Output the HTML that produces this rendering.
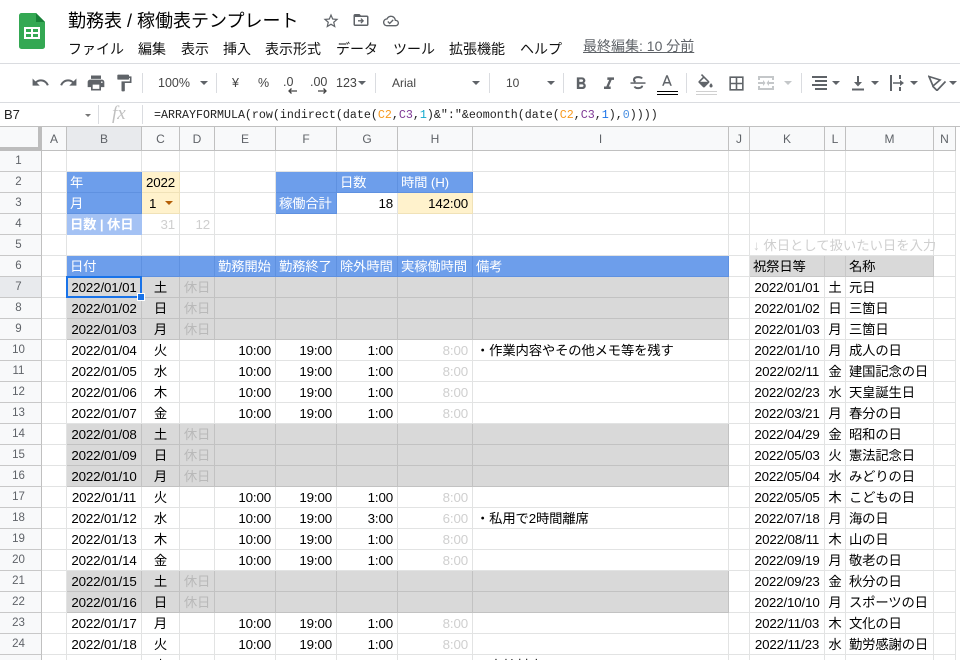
<!DOCTYPE html>
<html lang="ja"><head><meta charset="utf-8"><title>勤務表</title>
<style>
html,body{margin:0;padding:0;background:#fff;width:960px;height:660px;overflow:hidden}
body{position:relative;font-family:"Liberation Sans","Noto Sans CJK JP",sans-serif;color:#000}
.a{position:absolute;white-space:nowrap}
.t{font-size:18px;line-height:24px;top:9px;left:68px}
.m{font-size:14px;line-height:20px;top:39px;color:#111}
.tb{font-size:12.5px;line-height:16px;top:75px;color:#444}
.sep{position:absolute;width:1px;height:20px;top:73px;background:#dadce0}
.car{position:absolute;width:0;height:0;border-left:4px solid transparent;border-right:4px solid transparent;border-top:4px solid #5f6368;top:81px}
svg{position:absolute;display:block}
svg.i path{fill:#5f6368}
#grid{position:absolute;left:0;top:127px;width:960px;height:528px;overflow:hidden}
table{border-collapse:separate;border-spacing:0;table-layout:fixed;width:956px}
td,th{box-sizing:border-box;height:21px;padding:1px 3px 0;border-right:1px solid #e2e3e3;border-bottom:1px solid #e2e3e3;font-size:13.33px;line-height:16px;font-weight:400;white-space:nowrap;overflow:hidden;letter-spacing:-.15px;text-align:left;vertical-align:middle}
tr.h td,tr.h th{height:24px;background:#f8f9fa;border-right:1px solid #c0c0c0;border-bottom:1px solid #c0c0c0;font-size:12px;color:#5f6368;text-align:center;letter-spacing:0;padding:0}
th{background:#f8f9fa;border-right:1px solid #c0c0c0;border-bottom:1px solid #c8c8c8;font-size:11.5px;color:#5f6368;text-align:center;padding:0 4px 0 0;letter-spacing:0}
tr.h td.s,th.s{background:#e8eaed}
.c{text-align:center}
.r{text-align:right;padding-right:4px}
.g{background:#d9d9d9;border-color:#c2c2c2}
.b{background:#6d9eeb;color:#fff;border-color:#5f91e0}
.y{background:#fff2cc;border-color:#f0e2b8}
.l{color:#cfcfcf}
.o{color:#b9b9b9}
.p{background:#d9d9d9;border-color:#d9d9d9}
.clip{position:absolute;top:655px;height:5px;overflow:hidden;font-size:13.33px;line-height:21px;white-space:nowrap}
</style></head><body>

<svg style="left:19px;top:13px" width="26" height="36" viewBox="0 0 26 36"><path d="M2.5 0H17l9 9v24.5a2.5 2.5 0 0 1-2.5 2.5h-21A2.5 2.5 0 0 1 0 33.500V2.500A2.500 2.500 0 0 1 2.500 0z" fill="#34a853"/><path d="M17 0l9 9h-9z" fill="#188038"/><path d="M5 14h16v12H5z" fill="#fff"/><path d="M7 16h5v3H7zM14 16h5v3h-5zM7 21h5v3H7zM14 21h5v3h-5z" fill="#34a853"/></svg>

<div class="a t">勤務表 / 稼働表テンプレート</div>
<svg class="i" style="left:322px;top:11.500px" width="18" height="18" viewBox="0 0 24 24"><path d="M22 9.240l-7.190-.620L12 2 9.190 8.630 2 9.240l5.460 4.730L5.820 21 12 17.270 18.180 21l-1.630-7.030L22 9.240zM12 15.400l-3.760 2.270 1-4.280-3.320-2.880 4.380-.380L12 6.100l1.710 4.040 4.380.380-3.320 2.880 1 4.280L12 15.400z"/></svg>
<svg class="i" style="left:352px;top:11px" width="18" height="18" viewBox="0 0 24 24"><path d="M20 6h-8l-2-2H4c-1.100 0-2 .9-2 2v12c0 1.100.9 2 2 2h16c1.100 0 2-.9 2-2V8c0-1.100-.9-2-2-2zm0 12H4V8h16v10z"/><path d="M12.500 9.500l-1.200 1.200 1.500 1.500H8v1.800h4.800l-1.500 1.500 1.200 1.200 3.600-3.600z"/></svg>
<svg class="i" style="left:383px;top:12.500px" width="16" height="16" viewBox="0 0 24 24"><path d="M19.350 10.040C18.670 6.590 15.640 4 12 4 9.110 4 6.600 5.640 5.350 8.040 2.340 8.360 0 10.910 0 14c0 3.310 2.690 6 6 6h13c2.760 0 5-2.240 5-5 0-2.640-2.050-4.780-4.650-4.960zM19 18H6c-2.210 0-4-1.790-4-4 0-2.050 1.530-3.760 3.560-3.970l1.070-.110.500-.950C8.080 7.140 9.940 6 12 6c2.620 0 4.880 1.860 5.390 4.430l.3 1.500 1.530.110c1.560.1 2.780 1.410 2.780 2.960 0 1.650-1.350 3-3 3zm-9-3.820l-2.090-2.090L6.500 13.500 10 17l6.010-6.010-1.410-1.410z"/></svg>

<div class="a m" style="left:68px">ファイル</div>
<div class="a m" style="left:138px">編集</div>
<div class="a m" style="left:181px">表示</div>
<div class="a m" style="left:223px">挿入</div>
<div class="a m" style="left:265px">表示形式</div>
<div class="a m" style="left:336px">データ</div>
<div class="a m" style="left:393px">ツール</div>
<div class="a m" style="left:449px">拡張機能</div>
<div class="a m" style="left:520px">ヘルプ</div>
<div class="a m" style="left:583px;top:36px;color:#5f6368;text-decoration:underline">最終編集: 10 分前</div>

<div class="a" style="left:0;top:63px;width:960px;height:1px;background:#dadce0"></div>
<div class="a" style="left:0;top:102px;width:960px;height:1px;background:#dadce0"></div>

<svg class="i" style="left:30.500px;top:73px" width="19" height="19" viewBox="0 0 24 24"><path d="M12.500 8c-2.650 0-5.050.99-6.900 2.600L2 7v9h9l-3.620-3.620c1.390-1.160 3.160-1.880 5.120-1.880 3.540 0 6.550 2.310 7.600 5.500l2.370-.78C21.080 11.030 17.150 8 12.500 8z"/></svg>
<svg class="i" style="left:58.500px;top:73px" width="19" height="19" viewBox="0 0 24 24"><path d="M18.400 10.600C16.550 8.990 14.150 8 11.500 8c-4.650 0-8.580 3.030-9.960 7.220L3.900 16c1.050-3.190 4.050-5.500 7.600-5.500 1.950 0 3.730.72 5.120 1.880L13 16h9V7l-3.600 3.600z"/></svg>
<svg class="i" style="left:86px;top:72.500px" width="20" height="20" viewBox="0 0 24 24"><path d="M19 8H5c-1.660 0-3 1.340-3 3v6h4v4h12v-4h4v-6c0-1.660-1.340-3-3-3zm-3 11H8v-5h8v5zm3-7c-.55 0-1-.45-1-1s.45-1 1-1 1 .45 1 1-.45 1-1 1zm-1-9H6v4h12V3z"/></svg>
<svg class="i" style="left:114px;top:73px" width="20" height="20" viewBox="0 0 24 24"><path d="M18 4V3c0-.55-.45-1-1-1H5c-.55 0-1 .45-1 1v4c0 .55.45 1 1 1h12c.55 0 1-.45 1-1V6h1v4H9v11c0 .55.45 1 1 1h2c.55 0 1-.45 1-1v-9h8V4h-3z"/></svg>

<div class="sep" style="left:142px"></div>
<div class="a tb" style="left:158px">100%</div><div class="car" style="left:200px"></div>
<div class="sep" style="left:216px"></div>
<div class="a tb" style="left:232px">¥</div>
<div class="a tb" style="left:258px">%</div>
<div class="a tb" style="left:283px;top:74px">.0</div>
<svg style="left:286px;top:87px" width="12" height="8" viewBox="0 0 12 8"><path d="M11 4H3M5.500 1.500L3 4l2.500 2.500" fill="none" stroke="#444" stroke-width="1.300"/></svg>
<div class="a tb" style="left:310px;top:74px">.00</div>
<svg style="left:317px;top:87px" width="12" height="8" viewBox="0 0 12 8"><path d="M1 4h8M6.500 1.500L9 4 6.500 6.500" fill="none" stroke="#444" stroke-width="1.300"/></svg>
<div class="a tb" style="left:336px">123</div><div class="car" style="left:358px"></div>
<div class="sep" style="left:375px"></div>
<div class="a tb" style="left:392px;font-size:12px">Arial</div><div class="car" style="left:472px"></div>
<div class="sep" style="left:489px"></div>
<div class="a tb" style="left:506px;font-size:12px">10</div><div class="car" style="left:547px"></div>
<div class="sep" style="left:563px"></div>

<svg class="i" style="left:571px;top:73.500px" width="20" height="20" viewBox="0 0 24 24"><path d="M15.600 10.790c.97-.67 1.650-1.770 1.650-2.790 0-2.260-1.750-4-4-4H7v14h7.040c2.090 0 3.710-1.700 3.710-3.790 0-1.520-.86-2.820-2.150-3.420zM10 6.500h3c.83 0 1.500.67 1.500 1.500s-.67 1.500-1.500 1.500h-3v-3zm3.500 9H10v-3h3.500c.83 0 1.500.67 1.500 1.500s-.67 1.500-1.500 1.500z"/></svg>
<svg class="i" style="left:599px;top:73.500px" width="20" height="20" viewBox="0 0 24 24"><path d="M10 4v3h2.210l-3.420 8H6v3h8v-3h-2.210l3.420-8H18V4z"/></svg>
<svg style="left:629px;top:74px" width="18" height="18" viewBox="0 0 18 18"><path d="M13 4.500C12 2.800 5.500 2.300 5 5.500c-.2 1.200.6 2 1.500 2.500M5.500 12.500c1 2.200 7.500 2.300 7.700-.8" fill="none" stroke="#5f6368" stroke-width="2"/><path d="M1.500 8.300h15v1.500h-15z" fill="#5f6368"/></svg>
<svg class="i" style="left:657.500px;top:73px" width="18" height="18" viewBox="0 0 24 24"><path d="M11 3L5.500 17h2.250l1.120-3h6.250l1.120 3h2.250L13 3h-2zm-1.380 9L12 5.670 14.380 12H9.620z"/></svg>
<div class="a" style="left:657px;top:91px;width:21px;height:1px;background:#000"></div>
<div class="a" style="left:657px;top:94px;width:21px;height:1px;background:#000"></div>
<div class="sep" style="left:686px"></div>
<svg class="i" style="left:695.500px;top:74px" width="19" height="19" viewBox="0 0 24 24"><path d="M16.560 8.940L7.620 0 6.210 1.410l2.380 2.380-5.150 5.150c-.59.59-.59 1.540 0 2.120l5.500 5.500c.29.29.68.44 1.060.44s.77-.15 1.060-.44l5.500-5.500c.59-.58.59-1.530 0-2.120zM5.210 10L10 5.210 14.790 10H5.210zM19 11.500s-2 2.170-2 3.500c0 1.100.9 2 2 2s2-.9 2-2c0-1.330-2-3.500-2-3.500z"/><path d="M5 10h10l-5 5z"/></svg>
<div class="a" style="left:696px;top:91px;width:21px;height:1px;background:#d0d0d0"></div>
<div class="a" style="left:696px;top:94px;width:21px;height:1px;background:#d0d0d0"></div>
<svg class="i" style="left:726.500px;top:73.500px" width="19" height="19" viewBox="0 0 24 24"><path d="M3 3v18h18V3H3zm8 16H5v-6h6v6zm0-8H5V5h6v6zm8 8h-6v-6h6v6zm0-8h-6V5h6v6z"/></svg>
<svg style="left:758px;top:76px" width="16" height="14" viewBox="0 0 16 14"><path d="M0 0h16v2H0zM0 12h16v2H0zM0 0h2v4H0zM14 0h2v4h-2zM0 10h2v4H0zM14 10h2v4h-2zM0 6h5v2H0zM11 6h5v2h-5zM5 4l2.500 3L5 10zM11 4L8.500 7l2.500 3z" fill="#c4c7c9"/></svg>
<div class="car" style="left:784px;border-top-color:#c4c7c9"></div>
<div class="sep" style="left:801px"></div>
<svg style="left:812px;top:76px" width="15" height="14" viewBox="0 0 15 14"><path d="M0 0h15v2H0zM3 4h12v2H3zM0 8h15v2H0zM3 12h12v2H3z" fill="#5f6368"/></svg>
<div class="car" style="left:832px"></div>
<svg style="left:852px;top:76px" width="12" height="15" viewBox="0 0 12 15"><path d="M0 12.500h12v2H0zM5 0h2v6h3L6 10.500 2 6h3z" fill="#5f6368"/></svg>
<div class="car" style="left:871px"></div>
<svg style="left:890px;top:75px" width="14" height="16" viewBox="0 0 14 16"><path d="M0 0h2v16H0zM9 0h2v4H9zM9 12h2v4H9zM3 7.200h7V5l4 3-4 3V8.800H3z" fill="#5f6368"/></svg>
<div class="car" style="left:910px"></div>
<svg style="left:928px;top:75px" width="18" height="16" viewBox="0 0 18 16"><path d="M1 1.500l11 3.500-7 6z M4.500 11L9 15.500 17.500 6.500" fill="none" stroke="#5f6368" stroke-width="1.700"/></svg>
<div class="car" style="left:949px"></div>

<div class="a" style="left:4px;top:107px;font-size:13px;line-height:16px;color:#222">B7</div>
<div class="car" style="left:85px;top:114px;border-left-width:3px;border-right-width:3px;border-top-width:3px;border-top-color:#777"></div>
<div class="a" style="left:98px;top:105px;width:1px;height:19px;background:#dadce0"></div>
<div class="a" style="left:112px;top:102px;font-family:'Liberation Serif',serif;font-style:italic;font-size:19px;line-height:24px;color:#c0c0c0">fx</div>
<div class="a" style="left:142px;top:105px;width:1px;height:19px;background:#dadce0"></div>
<div class="a" style="left:154px;top:108px;font-family:'Liberation Mono',monospace;font-size:11.670px;line-height:15px;color:#222">=ARRAYFORMULA(row(indirect(date(<span style="color:#f7981d">C2</span>,<span style="color:#7e3794">C3</span>,<span style="color:#11a9cc">1</span>)&amp;":"&amp;eomonth(date(<span style="color:#f7981d">C2</span>,<span style="color:#7e3794">C3</span>,<span style="color:#1a73e8">1</span>),<span style="color:#4a90e2">0</span>))))</div>

<div class="a" style="left:0;top:126px;width:960px;height:1px;background:#c0c0c0"></div>

<div id="grid"><table>
<colgroup><col style="width:42px"><col style="width:25px"><col style="width:75px"><col style="width:38px"><col style="width:35px"><col style="width:61px"><col style="width:61px"><col style="width:61px"><col style="width:75px"><col style="width:256px"><col style="width:21px"><col style="width:75px"><col style="width:21px"><col style="width:88px"><col style="width:22px"></colgroup>
<tr class="h"><td><td>A<td class="s">B<td>C<td>D<td>E<td>F<td>G<td>H<td>I<td>J<td>K<td>L<td>M<td>N
<tr><th>1<td><td><td><td><td><td><td><td><td><td><td><td><td><td>
<tr><th>2<td><td class="b">年<td class="c y">2022<td><td><td class="b"><td class="b">日数<td class="b">時間 (H)<td><td><td><td><td><td>
<tr><th>3<td><td class="b">月<td class="y" style="padding-left:7px">1<td><td><td class="b">稼働合計<td class="r">18<td class="r y">142:00<td><td><td><td><td><td>
<tr><th>4<td><td style="background:#a4c2f4;color:#fff;font-weight:700;border-color:#a4c2f4">日数 | 休日<td class="r l">31<td class="r l">12<td><td><td><td><td><td><td><td><td><td>
<tr><th>5<td><td><td><td><td><td><td><td><td><td><td colspan="3" class="l" style="overflow:visible;letter-spacing:0">↓ 休日として扱いたい日を入力<td>
<tr><th>6<td><td class="b">日付<td class="b"><td class="b"><td class="b">勤務開始<td class="b">勤務終了<td class="b">除外時間<td class="b">実稼働時間<td class="b">備考<td><td class="p" style="border-right-color:#c8c8c8;border-bottom-color:#c8c8c8">祝祭日等<td class="p" style="border-right-color:#c8c8c8;border-bottom-color:#c8c8c8"><td class="p" style="border-right-color:#c8c8c8;border-bottom-color:#c8c8c8">名称<td>
<tr><th class="s">7<td><td class="c g">2022/01/01<td class="c g">土<td class="c g o">休日<td class="g"><td class="g"><td class="g"><td class="g"><td class="g"><td><td class="c">2022/01/01<td class="c">土<td>元日<td>
<tr><th>8<td><td class="c g">2022/01/02<td class="c g">日<td class="c g o">休日<td class="g"><td class="g"><td class="g"><td class="g"><td class="g"><td><td class="c">2022/01/02<td class="c">日<td>三箇日<td>
<tr><th>9<td><td class="c g">2022/01/03<td class="c g">月<td class="c g o">休日<td class="g"><td class="g"><td class="g"><td class="g"><td class="g"><td><td class="c">2022/01/03<td class="c">月<td>三箇日<td>
<tr><th>10<td><td class="c">2022/01/04<td class="c">火<td><td class="r">10:00<td class="r">19:00<td class="r">1:00<td class="r l">8:00<td>・作業内容やその他メモ等を残す<td><td class="c">2022/01/10<td class="c">月<td>成人の日<td>
<tr><th>11<td><td class="c">2022/01/05<td class="c">水<td><td class="r">10:00<td class="r">19:00<td class="r">1:00<td class="r l">8:00<td><td><td class="c">2022/02/11<td class="c">金<td>建国記念の日<td>
<tr><th>12<td><td class="c">2022/01/06<td class="c">木<td><td class="r">10:00<td class="r">19:00<td class="r">1:00<td class="r l">8:00<td><td><td class="c">2022/02/23<td class="c">水<td>天皇誕生日<td>
<tr><th>13<td><td class="c">2022/01/07<td class="c">金<td><td class="r">10:00<td class="r">19:00<td class="r">1:00<td class="r l">8:00<td><td><td class="c">2022/03/21<td class="c">月<td>春分の日<td>
<tr><th>14<td><td class="c g">2022/01/08<td class="c g">土<td class="c g o">休日<td class="g"><td class="g"><td class="g"><td class="g"><td class="g"><td><td class="c">2022/04/29<td class="c">金<td>昭和の日<td>
<tr><th>15<td><td class="c g">2022/01/09<td class="c g">日<td class="c g o">休日<td class="g"><td class="g"><td class="g"><td class="g"><td class="g"><td><td class="c">2022/05/03<td class="c">火<td>憲法記念日<td>
<tr><th>16<td><td class="c g">2022/01/10<td class="c g">月<td class="c g o">休日<td class="g"><td class="g"><td class="g"><td class="g"><td class="g"><td><td class="c">2022/05/04<td class="c">水<td>みどりの日<td>
<tr><th>17<td><td class="c">2022/01/11<td class="c">火<td><td class="r">10:00<td class="r">19:00<td class="r">1:00<td class="r l">8:00<td><td><td class="c">2022/05/05<td class="c">木<td>こどもの日<td>
<tr><th>18<td><td class="c">2022/01/12<td class="c">水<td><td class="r">10:00<td class="r">19:00<td class="r">3:00<td class="r l">6:00<td>・私用で2時間離席<td><td class="c">2022/07/18<td class="c">月<td>海の日<td>
<tr><th>19<td><td class="c">2022/01/13<td class="c">木<td><td class="r">10:00<td class="r">19:00<td class="r">1:00<td class="r l">8:00<td><td><td class="c">2022/08/11<td class="c">木<td>山の日<td>
<tr><th>20<td><td class="c">2022/01/14<td class="c">金<td><td class="r">10:00<td class="r">19:00<td class="r">1:00<td class="r l">8:00<td><td><td class="c">2022/09/19<td class="c">月<td>敬老の日<td>
<tr><th>21<td><td class="c g">2022/01/15<td class="c g">土<td class="c g o">休日<td class="g"><td class="g"><td class="g"><td class="g"><td class="g"><td><td class="c">2022/09/23<td class="c">金<td>秋分の日<td>
<tr><th>22<td><td class="c g">2022/01/16<td class="c g">日<td class="c g o">休日<td class="g"><td class="g"><td class="g"><td class="g"><td class="g"><td><td class="c">2022/10/10<td class="c">月<td>スポーツの日<td>
<tr><th>23<td><td class="c">2022/01/17<td class="c">月<td><td class="r">10:00<td class="r">19:00<td class="r">1:00<td class="r l">8:00<td><td><td class="c">2022/11/03<td class="c">木<td>文化の日<td>
<tr><th>24<td><td class="c">2022/01/18<td class="c">火<td><td class="r">10:00<td class="r">19:00<td class="r">1:00<td class="r l">8:00<td><td><td class="c">2022/11/23<td class="c">水<td>勤労感謝の日<td>
</table></div>

<div class="a" style="left:0;top:655px;width:41px;height:5px;background:#f8f9fa"></div>
<svg style="left:0;top:655px" width="960" height="5" viewBox="0 0 960 5"><path d="M66.500 0v5M141.500 0v5M179.500 0v5M214.500 0v5M275.500 0v5M336.500 0v5M397.500 0v5M472.500 0v5M728.500 0v5M749.500 0v5M824.500 0v5M845.500 0v5M933.500 0v5M955.500 0v5" stroke="#e2e3e3" fill="none"/><path d="M41.500 0v5" stroke="#c0c0c0" fill="none"/></svg>
<div class="clip" style="left:142px;width:37px;text-align:center">水</div>
<div class="clip" style="left:476px;width:200px">・出社対応</div>

<div class="a" style="left:38px;top:127px;width:4px;height:24px;background:#bdbdbd"></div>
<div class="a" style="left:0;top:147px;width:42px;height:4px;background:#bdbdbd"></div>

<div class="car" style="left:165px;top:201px;border-top-color:#b45f06"></div>

<div class="a" style="left:66px;top:276px;width:72px;height:18px;border:2px solid #1a73e8"></div>
<div class="a" style="left:138px;top:294px;width:6px;height:6px;background:#1a73e8;outline:1px solid #fff"></div>
</body></html>
